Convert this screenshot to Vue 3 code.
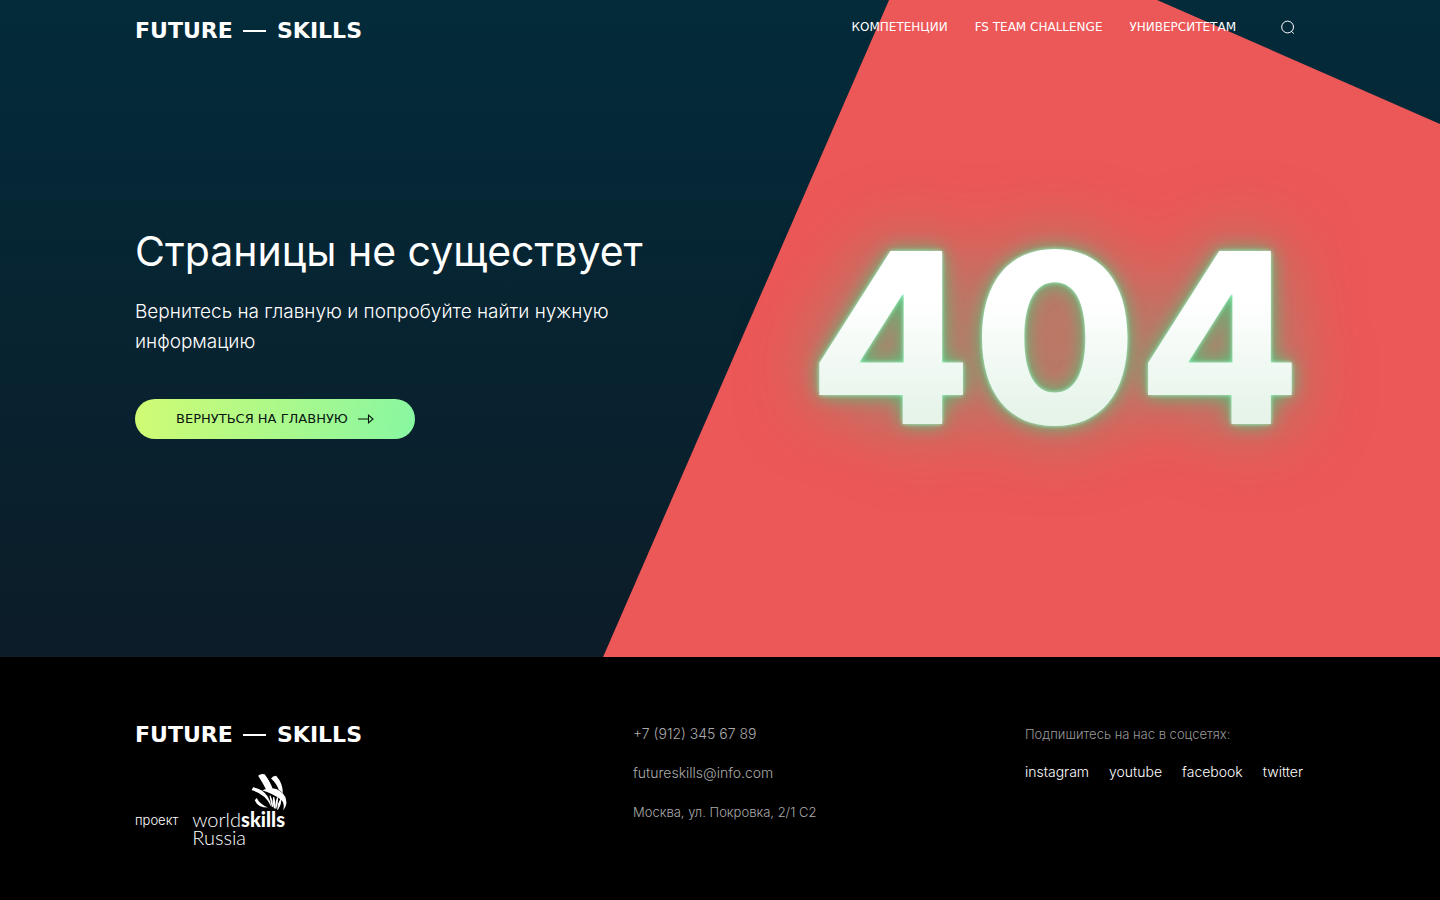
<script setup>
const nav = ['Компетенции', 'FS Team Challenge', 'Университетам']
const socials = ['instagram', 'youtube', 'facebook', 'twitter']
</script>

<template>
  <div class="page">
    <main class="hero">
      <div class="slab" aria-hidden="true"></div>
      <header class="top">
        <a class="brand" href="#" aria-label="Future Skills"><span>FUTURE</span><i></i><span>SKILLS</span></a>
        <nav class="nav">
          <a v-for="item in nav" :key="item" href="#">{{ item }}</a>
          <button class="search" type="button" aria-label="Поиск">
            <svg width="14" height="15" viewBox="0 0 14 15" fill="none" stroke="#fff">
              <circle cx="6.6" cy="7" r="5.9" />
              <path d="M10.4 11.2l2.4 2.5" />
            </svg>
          </button>
        </nav>
      </header>
      <div class="body">
        <section class="message">
          <h1>Страницы не существует</h1>
          <p>Вернитесь на главную и попробуйте найти нужную информацию</p>
          <a class="cta" href="#">
            <span>Вернуться на главную</span>
            <svg width="16" height="10" viewBox="0 0 16 10" fill="none" stroke="#06140f" stroke-width="1.1">
              <path d="M0 5h10M10.5 1.2L15 5l-4.5 3.8z" />
            </svg>
          </a>
        </section>
        <div class="code">404</div>
      </div>
    </main>

    <footer class="footer">
      <div>
        <a class="brand" href="#" aria-label="Future Skills"><span>FUTURE</span><i></i><span>SKILLS</span></a>
        <div class="project">
          <span>проект</span>
          <a class="ws" href="#">
            <svg width="36" height="37" viewBox="393 189 106 109" fill="#fff">
              <path d="M414 197q8-7 19-4q14 17 25 45q-12-3-21-1q-10-20-23-40z" />
              <path d="M452 205q5-7 15-8q20 22 20 52q-6-8-12-10q-7-20-23-34z" />
              <path d="M395 240l4-9q28 4 43 27q9 14 11 31q-17-39-58-49z" />
              <path d="M426 240q32-14 55 4q18 14 16 36q-3 12-9 19q5-24-8-32q-20-16-54-27z" />
              <path d="M404 269l6-6q8 18 33 28q-30 0-39-22z" />
              <path d="M449 256q8 14 7 33q-4-16-7-33zM460 260q4 16 2 33q-5-16-2-33zM471 261q1 16-5 33q-1-17 5-33zM480 267q2 14-8 28q0-15 8-28z" stroke="#fff" stroke-width="3" />
            </svg>
            <span class="ws-name">world<b>skills</b></span>
            <span class="ws-name">Russia</span>
          </a>
        </div>
      </div>
      <address class="contacts">
        <a href="tel:+79123456789">+7 (912) 345 67 89</a>
        <a href="mailto:futureskills@info.com">futureskills@info.com</a>
        <span class="small">Москва, ул. Покровка, 2/1 С2</span>
      </address>
      <div class="social">
        <p class="small">Подпишитесь на нас в соцсетях:</p>
        <div class="links">
          <a v-for="s in socials" :key="s" href="#">{{ s }}</a>
        </div>
      </div>
    </footer>
  </div>
</template>

<style>
body {
  background: #000;
}
</style>

<style scoped>
.page {
  font-family: Inter, "Open Sans", sans-serif;
  color: #fff;
  min-height: 100vh;
  display: flex;
  flex-direction: column;
}
a {
  color: inherit;
  text-decoration: none;
}
.hero {
  position: relative;
  flex: 1;
  padding: 20px 135px 0;
  background: linear-gradient(180deg, #032b3a, #0c1c28);
}
.slab {
  position: absolute;
  inset: 0;
  background: #ec5757;
  clip-path: polygon(61.74% 0, 80.35% 0, 100% 18.87%, 100% 100%, 41.88% 100%);
}
.top {
  position: relative;
  display: flex;
  justify-content: space-between;
  align-items: flex-start;
}
.brand {
  display: flex;
  width: 227px;
  justify-content: space-between;
  align-items: center;
  font: bold 22px/22px "DejaVu Sans", sans-serif;
}
.brand i {
  width: 23px;
  height: 2px;
  background: currentColor;
}
.nav {
  display: flex;
  align-items: center;
  gap: 27px;
  font: 12px/15px "DejaVu Sans", sans-serif;
  text-transform: uppercase;
}
.search {
  width: 42px;
  height: 15px;
  padding: 0 0 0 18px;
  border: 0;
  background: none;
  display: flex;
}
.body {
  position: relative;
  display: flex;
  justify-content: space-between;
  padding-top: 184px;
}
.message {
  width: 520px;
}
h1 {
  margin: 0;
  font-size: 41px;
  line-height: 50px;
  font-weight: 400;
  white-space: nowrap;
}
p {
  margin: 0;
}
.message p {
  margin: 21px 0 42px;
  font-size: 19px;
  line-height: 30px;
  font-weight: 300;
}
.cta {
  display: flex;
  width: 280px;
  height: 40px;
  box-sizing: border-box;
  align-items: center;
  justify-content: center;
  gap: 10px;
  border-radius: 20px;
  color: #06140f;
  font: 13px/16px "DejaVu Sans", sans-serif;
  text-transform: uppercase;
  background: linear-gradient(100deg, #d0fb73, #88f7a2);
}
.code {
  margin: -8px 4px 0 0;
  font-size: 238px;
  line-height: 238px;
  font-weight: 800;
  background: linear-gradient(180deg, #fff 35%, #e6f4ea 82%);
  -webkit-background-clip: text;
  background-clip: text;
  color: transparent;
  filter: drop-shadow(0 0 2px #a5ffce) drop-shadow(0 0 9px #39d481cc) drop-shadow(0 0 38px #58ba8499);
}
.footer {
  display: grid;
  grid-template-columns: 498fr 392fr 280fr;
  padding: 67px 135px 54px;
  background: #000;
  font-size: 14px;
  line-height: 20px;
  font-weight: 300;
}
.small {
  font-size: 13px;
}
.project {
  display: flex;
  align-items: center;
  gap: 14px;
  margin-top: 27px;
}
.project > span {
  padding-top: 20px;
  font-size: 13px;
}
.ws {
  display: flex;
  flex-direction: column;
}
.ws svg {
  margin-left: 59px;
}
.ws-name {
  font: 300 20px/18px Lato, sans-serif;
}
.ws-name b {
  font-weight: 900;
}
.contacts {
  display: flex;
  flex-direction: column;
  align-items: flex-start;
  gap: 19px;
  font-style: normal;
  color: #aaa;
}
.social p {
  color: #999;
}
.links {
  display: flex;
  gap: 20px;
  margin-top: 18px;
}
</style>
